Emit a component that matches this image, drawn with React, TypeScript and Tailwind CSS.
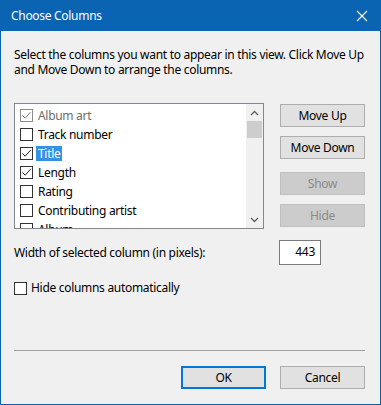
import React from "react";

const font = { fontFamily: '"Noto Sans", "Segoe UI", sans-serif' };

function Check({ checked, disabled }: { checked?: boolean; disabled?: boolean }) {
  return (
    <span
      className={`flex h-[13px] w-[13px] shrink-0 items-center justify-center border bg-white ${
        disabled ? "border-[#8c8c8c]" : "border-[#333333]"
      }`}
    >
      {checked && (
        <svg width="11" height="11" viewBox="0 0 11 11">
          <path
            d="M1.5 5.5 L4.2 8.2 L9.5 2.2"
            fill="none"
            stroke={disabled ? "#7a7a7a" : "#222222"}
            strokeWidth="1"
          />
        </svg>
      )}
    </span>
  );
}

function Btn({ label, disabled, primary, className = "" }: { label: string; disabled?: boolean; primary?: boolean; className?: string }) {
  return (
    <div
      className={`flex h-[23px] w-[85px] items-center justify-center text-[12px] ${
        disabled
          ? "border border-[#bfbfbf] bg-[#cccccc] text-[#8a8a8a]"
          : primary
          ? "border-2 border-[#0078d7] bg-[#e1e1e1] text-black"
          : "border border-[#adadad] bg-[#e1e1e1] text-black"
      } ${className}`}
    >
      {label}
    </div>
  );
}

const items: { label: string; checked: boolean; disabled?: boolean; selected?: boolean }[] = [
  { label: "Album art", checked: true, disabled: true },
  { label: "Track number", checked: false },
  { label: "Title", checked: true, selected: true },
  { label: "Length", checked: true },
  { label: "Rating", checked: false },
  { label: "Contributing artist", checked: false },
  { label: "Album", checked: false },
];

export default function App() {
  return (
    <div className="flex h-[405px] w-[381px] flex-col bg-[#0b64b2] tracking-[-0.3px]" style={font}>
      <div className="flex h-[31px] shrink-0 items-center justify-between pl-[11px] pr-[13px] text-white">
        <span className="text-[12px]">Choose Columns</span>
        <svg width="12" height="12" viewBox="0 0 12 12">
          <path d="M1 1 L11 11 M11 1 L1 11" stroke="#ffffff" strokeWidth="1.1" />
        </svg>
      </div>
      <div className="mx-[1px] mb-[1px] flex flex-1 flex-col bg-[#f0f0f0] pl-[13px] pr-[15px] pt-[16px] text-[12px] text-black">
        <div className="flex flex-col whitespace-nowrap">
          <div className="h-[15px] leading-[15px]">Select the columns you want to appear in this view. Click Move Up</div>
          <div className="h-[15px] leading-[15px]">and Move Down to arrange the columns.</div>
        </div>
        <div className="mt-[26px] flex">
          <div className="relative flex h-[126px] w-[250px] overflow-hidden border border-[#828790] bg-white">
            <div className="flex flex-1 flex-col pt-[2px] pl-[5px]">
              {items.map((it) => (
                <div key={it.label} className="flex h-[19px] shrink-0 items-center">
                  <Check checked={it.checked} disabled={it.disabled} />
                  <span
                    className={`ml-[3px] px-[2px] leading-[15px] ${
                      it.selected ? "bg-[#3391e6] text-white" : it.disabled ? "text-[#6d6d6d]" : ""
                    }`}
                  >
                    {it.label}
                  </span>
                </div>
              ))}
            </div>
            <div className="flex w-[17px] shrink-0 flex-col bg-[#f0f0f0]">
              <div className="flex h-[17px] items-center justify-center">
                <svg width="9" height="6" viewBox="0 0 9 6">
                  <path d="M1 5 L4.5 1.5 L8 5" fill="none" stroke="#606060" strokeWidth="1.3" />
                </svg>
              </div>
              <div className="mx-[1px] h-[17px] bg-[#cdcdcd]" />
              <div className="flex-1" />
              <div className="flex h-[17px] items-center justify-center">
                <svg width="9" height="6" viewBox="0 0 9 6">
                  <path d="M1 1 L4.5 4.5 L8 1" fill="none" stroke="#606060" strokeWidth="1.3" />
                </svg>
              </div>
            </div>
          </div>
          <div className="ml-[16px] flex flex-col pt-[1px]">
            <Btn label="Move Up" />
            <Btn label="Move Down" className="mt-[9px]" />
            <Btn label="Show" disabled className="mt-[13px]" />
            <Btn label="Hide" disabled className="mt-[9px]" />
          </div>
        </div>
        <div className="mt-[11px] flex items-center justify-between pr-[44px]">
          <span>Width of selected column (in pixels):</span>
          <div className="flex h-[25px] w-[42px] items-start justify-end border border-[#7a7a7a] bg-white pr-[5px] pt-[2px]">
            443
          </div>
        </div>
        <div className="mt-[14px] flex items-center">
          <Check />
          <span className="ml-[4px]">Hide columns automatically</span>
        </div>
        <div className="flex-1" />
        <div className="h-[1px] bg-[#a0a0a0]" />
        <div className="mt-[15px] mb-[15px] flex justify-end gap-[14px]">
          <Btn label="OK" primary />
          <Btn label="Cancel" />
        </div>
      </div>
    </div>
  );
}
